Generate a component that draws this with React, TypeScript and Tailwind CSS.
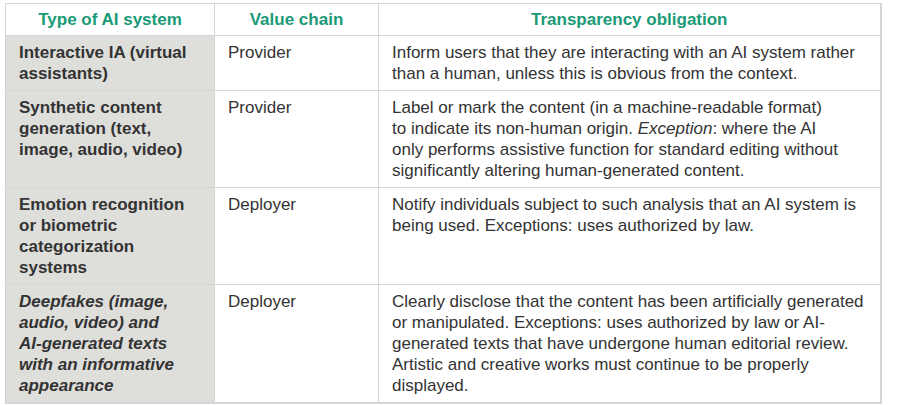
import { Fragment, type ReactNode } from "react";

// each cell is given as its lines, as they break in the source table
type Row = { type: ReactNode[]; italic?: boolean; chain: string; obligation: ReactNode[] };

const rows: Row[] = [
  {
    type: ["Interactive IA (virtual", "assistants)"],
    chain: "Provider",
    obligation: [
      "Inform users that they are interacting with an AI system rather",
      "than a human, unless this is obvious from the context.",
    ],
  },
  {
    type: ["Synthetic content", "generation (text,", "image, audio, video)"],
    chain: "Provider",
    obligation: [
      "Label or mark the content (in a machine-readable format)",
      <>
        to indicate its non-human origin. <em>Exception</em>: where the AI
      </>,
      "only performs assistive function for standard editing without",
      "significantly altering human-generated content.",
    ],
  },
  {
    type: ["Emotion recognition", "or biometric", "categorization", "systems"],
    chain: "Deployer",
    obligation: [
      "Notify individuals subject to such analysis that an AI system is",
      "being used. Exceptions: uses authorized by law.",
    ],
  },
  {
    type: ["Deepfakes (image,", "audio, video) and", "AI-generated texts", "with an informative", "appearance"],
    italic: true,
    chain: "Deployer",
    obligation: [
      "Clearly disclose that the content has been artificially generated",
      "or manipulated. Exceptions: uses authorized by law or AI-",
      "generated texts that have undergone human editorial review.",
      "Artistic and creative works must continue to be properly",
      "displayed.",
    ],
  },
];

function Lines({ lines }: { lines: ReactNode[] }) {
  return (
    <>
      {lines.map((l, i) => (
        <Fragment key={i}>
          {i > 0 && <br />}
          {l}
        </Fragment>
      ))}
    </>
  );
}

export default function App() {
  return (
    <div className="w-[900px] h-[405px] bg-white pt-[3px] pl-[5px] font-['Liberation_Sans',Arial,sans-serif] text-[17px] leading-[21px] text-[#333333]">
      <table className="w-[875px] table-fixed border-collapse border-r-2 border-b-2 border-[#d6d6d6]">
        <colgroup>
          <col className="w-[209px]" />
          <col className="w-[164px]" />
          <col className="w-[502px]" />
        </colgroup>
        <thead>
          <tr className="h-[32px]">
            <th className="border border-[#d6d6d6] font-bold text-[#1b9a77] text-center align-middle whitespace-nowrap">
              Type of AI system
            </th>
            <th className="border border-[#d6d6d6] font-bold text-[#1b9a77] text-center align-middle whitespace-nowrap">
              Value chain
            </th>
            <th className="border border-[#d6d6d6] font-bold text-[#1b9a77] text-center align-middle whitespace-nowrap">
              Transparency obligation
            </th>
          </tr>
        </thead>
        <tbody>
          {rows.map((r, i) => (
            <tr key={i}>
              <td
                className={`border border-[#d6d6d6] bg-[#dededb] font-bold align-top pl-[13px] pt-[6px] pb-[6px] whitespace-nowrap ${
                  r.italic ? "italic" : ""
                }`}
              >
                <Lines lines={r.type} />
              </td>
              <td className="border border-[#d6d6d6] align-top pl-[13px] pt-[6px] pb-[6px] whitespace-nowrap">
                {r.chain}
              </td>
              <td className="border border-[#d6d6d6] align-top pl-[13px] pt-[6px] pb-[6px] whitespace-nowrap">
                <Lines lines={r.obligation} />
              </td>
            </tr>
          ))}
        </tbody>
      </table>
    </div>
  );
}
